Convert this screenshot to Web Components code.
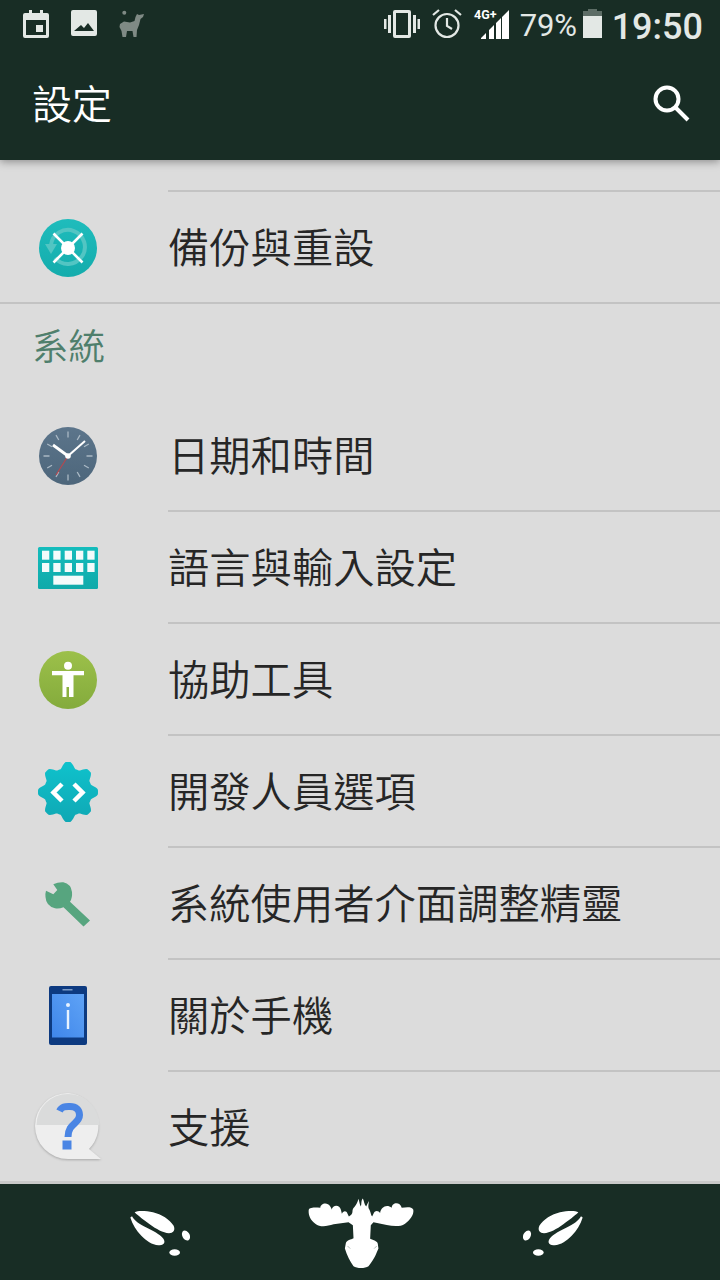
<!DOCTYPE html>
<html lang="zh-Hant">
<head>
<meta charset="utf-8">
<title>設定</title>
<style>
   html, body { margin: 0; padding: 0; }
   body {
      width: 720px;
      height: 1280px;
      overflow: hidden;
      display: flex;
      flex-direction: column;
      background: #dcdcdc;
      font-family: "Noto Sans CJK TC", "Noto Sans", sans-serif;
   }
</style>
</head>
<body>
   <app-header title-text="設定"></app-header>
   <settings-list>
      <list-divider></list-divider>
      <settings-item label="備份與重設" icon="backup" full-divider></settings-item>
      <section-title>系統</section-title>
      <settings-item label="日期和時間" icon="clock"></settings-item>
      <settings-item label="語言與輸入設定" icon="keyboard"></settings-item>
      <settings-item label="協助工具" icon="access"></settings-item>
      <settings-item label="開發人員選項" icon="dev"></settings-item>
      <settings-item label="系統使用者介面調整精靈" icon="tuner"></settings-item>
      <settings-item label="關於手機" icon="phone"></settings-item>
      <settings-item label="支援" icon="help" no-divider></settings-item>
   </settings-list>
   <moose-nav></moose-nav>

<script>
const keys = [4, 15.3, 26.7, 38, 49.3]
   .map(x => `<rect x="${x}" y="12.700" width="7.300" height="9"/><rect x="${x}" y="25" width="7.300" height="9"/>`)
   .join("");

// rounded 8-tooth gear outline, sampled around the centre
let gear = "";
for (let i = 0; i < 160; i++) {
   const a = i / 160 * Math.PI * 2;
   const r = 27 + 3 * Math.max(-1, Math.min(1, 1.3 * Math.cos(8 * a)));
   gear += `${i ? "L" : "M"}${(30 + r * Math.sin(a)).toFixed(2)} ${(30 - r * Math.cos(a)).toFixed(2)}`;
}

// icons are drawn in a 60x60 box, centred in the item's icon column
const ICONS = {
   backup: `
      <defs><linearGradient id="g" x1="0" y1="0" x2="0" y2="1"><stop offset="0" stop-color="#1fbcbc"/><stop offset="1" stop-color="#14acac"/></linearGradient></defs>
      <circle cx="30" cy="30" r="29" fill="url(#g)"/>
      <path d="M13 27a17 17 0 1 1 4 13" fill="none" stroke="#52c5c3" stroke-width="4"/>
      <path d="M7 26h12l-6 10z" fill="#52c5c3"/>
      <path d="M15.500 15.500l29 29M44.500 15.500l-29 29" stroke="#fff" stroke-width="2.600"/>
      <circle cx="30" cy="30" r="7" fill="#fff"/>`,
   clock: `
      <defs><linearGradient id="g" x1="0" y1="0" x2="0" y2="1"><stop offset="0" stop-color="#5c758b"/><stop offset="1" stop-color="#4d667b"/></linearGradient></defs>
      <circle cx="30" cy="30" r="29" fill="url(#g)"/>
      <g stroke="#a9b8c4" stroke-width="1.300">
         <path d="M30 5.500v6M30 48.500v6M5.500 30h6M48.500 30h6M18 9.200l2.800 4.800M42 9.200l-2.800 4.800M18 50.800l2.800-4.800M42 50.800l-2.800-4.800M9.200 18l4.800 2.800M50.800 18l-4.800 2.800M9.200 42l4.800-2.800M50.800 42l-4.800-2.800"/>
      </g>
      <path d="M30 30L18 49" stroke="#b5484f" stroke-width="1.200"/>
      <path d="M30 30L15 19" stroke="#fff" stroke-width="2.800"/>
      <path d="M30 30L47 15" stroke="#fff" stroke-width="2"/>
      <circle cx="30" cy="30" r="2.800" fill="#fff"/>`,
   keyboard: `
      <defs><linearGradient id="g" x1="0" y1="0" x2="0" y2="1"><stop offset="0" stop-color="#14bcbc"/><stop offset="1" stop-color="#10aaaa"/></linearGradient></defs>
      <rect x="0" y="9" width="60" height="42" rx="1.500" fill="url(#g)"/>
      <g fill="#f4fbfb">
         ${keys}
         <rect x="15.300" y="37.700" width="30" height="9"/>
      </g>`,
   access: `
      <defs><linearGradient id="g" x1="0" y1="0" x2="0" y2="1"><stop offset="0" stop-color="#9cc04a"/><stop offset="1" stop-color="#84ab3c"/></linearGradient></defs>
      <circle cx="30" cy="30" r="29" fill="url(#g)"/>
      <circle cx="30" cy="15.700" r="4" fill="#fff"/>
      <path d="M14 21h32v4.300H35.500V47H31V37h-2.500v10H24.500V25.300H14z" fill="#fff"/>`,
   dev: `
      <defs><linearGradient id="g" x1="0" y1="0" x2="0" y2="1"><stop offset="0" stop-color="#0fc2cc"/><stop offset="1" stop-color="#0fa8b4"/></linearGradient></defs>
      <path d="${gear}Z" fill="url(#g)"/>
      <path d="M24 22l-8.500 8.500L24 39M36 22l8.500 8.500L36 39" fill="none" stroke="#fff" stroke-width="4.500"/>`,
   tuner: `
      <path d="M15.300 10.300Q20 8 25.300 8.300Q33 10 34 18Q34.500 24 32 27.700L52 46.500L45.500 52.500L25.500 33.300Q21 35 17 34.300Q8 32 7.500 23Q7 20 8 16.700L15.300 20.300L19.300 16Z" fill="#57a57f"/>`,
   phone: `
      <defs><linearGradient id="g" x1="1" y1="0" x2="0" y2="1"><stop offset="0" stop-color="#5fa3f6"/><stop offset="1" stop-color="#3f86ea"/></linearGradient></defs>
      <rect x="11" y="0" width="38" height="59" rx="2" fill="#0d3a80"/>
      <rect x="24.500" y="3" width="10" height="1.500" fill="#7b9bc8"/>
      <rect x="14" y="8" width="32" height="43.500" fill="url(#g)"/>
      <circle cx="30" cy="19" r="2" fill="#e8f3ff"/>
      <rect x="28.800" y="24" width="2.400" height="19" fill="#e8f3ff"/>`,
   help: `
      <g transform="translate(-3 -5)">
         <path d="M33 0A33 33 0 0 0 33 66L66 66L54 56A33 33 0 0 0 33 0Z" fill="#eeeeee" style="filter:drop-shadow(0 1px 1px #a8a8a8)"/>
         <path d="M1.500 32a31.500 31 0 0 1 63 0z" fill="#dadbdb"/>
         <path d="M24.500 18C27 13 31 13.500 35 13.500C41 13.500 44.500 17 44.500 22C44.500 31 33 30 33 44" fill="none" stroke="#4a85e4" stroke-width="7"/>
         <rect x="27.500" y="47.500" width="9" height="9" fill="#4a85e4"/>
      </g>`
};

class ListDivider extends HTMLElement {
   constructor() {
      super();
      this.attachShadow({ mode: "open" }).innerHTML = `
         <style>
            :host { display: block; height: 2px; margin-left: 168px; background: #c3c3c3; }
         </style>`;
   }
}

class SectionTitle extends HTMLElement {
   constructor() {
      super();
      this.attachShadow({ mode: "open" }).innerHTML = `
         <style>
            :host {
               display: flex;
               align-items: center;
               height: 80px;
               padding: 0 0 16px 32px;
               font-size: 36.500px;
               font-weight: 350;
               color: #4f7f6c;
            }
         </style>
         <slot></slot>`;
   }
}

class SettingsItem extends HTMLElement {
   constructor() {
      super();
      const icon = ICONS[this.getAttribute("icon")] || "";
      this.attachShadow({ mode: "open" }).innerHTML = `
         <style>
            :host { display: block; }
            .row {
               display: flex;
               align-items: center;
               height: 110px;
            }
            .icon { flex: none; width: 168px; padding-left: 38px; box-sizing: border-box; }
            .icon svg { display: block; margin-top: 2px; overflow: visible; }
            .label { font-size: 41.300px; font-weight: 350; color: #262626; white-space: nowrap; line-height: 1; margin-top: -3px; }
            .line { height: 2px; background: #c3c3c3; margin-left: 168px; }
            :host([full-divider]) .line { margin-left: 0; }
            :host([no-divider]) .line { display: none; }
         </style>
         <div class="row">
            <div class="icon"><svg width="60" height="60" viewBox="0 0 60 60">${icon}</svg></div>
            <div class="label">${this.getAttribute("label")}</div>
         </div>
         <div class="line"></div>`;
   }
}

class SettingsList extends HTMLElement {
   constructor() {
      super();
      this.attachShadow({ mode: "open" }).innerHTML = `
         <style>
            :host {
               display: block;
               flex: 1;
               min-height: 0;
               overflow: hidden;
               padding-top: 30px;
               background: #dcdcdc;
            }
         </style>
         <slot></slot>`;
   }
}

class AppHeader extends HTMLElement {
   constructor() {
      super();
      this.attachShadow({ mode: "open" }).innerHTML = `
         <style>
            :host {
               display: block;
               flex: none;
               position: relative;
               z-index: 2;
               background: #182d25;
               box-shadow: 0 2px 8px rgba(0,0,0,.35);
            }
            .status {
               display: flex;
               align-items: center;
               height: 48px;
               padding: 0 17px 0 23px;
               color: #e3e8e5;
            }
            .status svg { display: block; flex: none; overflow: visible; }
            .left { display: flex; gap: 22px; flex: 1; }
            .pct { font: 31px "Roboto", sans-serif; margin: 2px 6px 0 10px; letter-spacing: -.2px; }
            .time { font: 500 36px "Roboto", sans-serif; margin: 5px 0 0 10px; }
            .bar {
               display: flex;
               align-items: center;
               justify-content: space-between;
               height: 112px;
               padding: 0 30px 4px 32px;
               box-sizing: border-box;
               color: #fff;
            }
            .title { font-size: 40px; font-weight: 350; line-height: 1; }
            .bar svg { display: block; margin-top: 1px; }
         </style>
         <div class="status">
            <div class="left">
               <svg width="26" height="28" viewBox="0 0 26 28"><path fill="#e3e8e5" fill-rule="evenodd" d="M6 0h3v3h8V0h3v3h4a2 2 0 0 1 2 2v21a2 2 0 0 1-2 2H2a2 2 0 0 1-2-2V5a2 2 0 0 1 2-2h4zM3 10v15h20V10z"/><rect x="13" y="15" width="7" height="7" fill="#e3e8e5"/></svg>
               <svg width="26" height="26" viewBox="0 0 26 26"><path fill="#e3e8e5" fill-rule="evenodd" d="M2 0h22a2 2 0 0 1 2 2v22a2 2 0 0 1-2 2H2a2 2 0 0 1-2-2V2a2 2 0 0 1 2-2zM3 21l7-6 3 3 4-5 6 8z"/></svg>
               <svg width="26" height="28" viewBox="0 0 26 28"><circle cx="5.300" cy="2.700" r="2" fill="#7f8a85"/><path fill="#7f8a85" d="M25 4L24 7L21.500 9L20 15L18 20L17.500 27L14.500 27L13.500 21L8 21L7 27L3.500 27L2.500 21L.5 17L1 14L5 11.500L11 12.500L15.500 11L16.500 7L18 4L20 5z"/></svg>
            </div>
            <svg width="36" height="28" viewBox="0 0 36 28" fill="#e3e8e5"><path fill-rule="evenodd" d="M11 0h14a2 2 0 0 1 2 2v24a2 2 0 0 1-2 2H11a2 2 0 0 1-2-2V2a2 2 0 0 1 2-2zm1 3v22h12V3z"/><rect x="4" y="5" width="3" height="18"/><rect x="29" y="5" width="3" height="18"/><rect x="0" y="9" width="2.500" height="10"/><rect x="33.500" y="9" width="2.500" height="10"/></svg>
            <svg width="30" height="30" viewBox="0 0 30 30" fill="none" stroke="#e3e8e5" stroke-width="2.200" style="margin-left:12px"><circle cx="15" cy="16.500" r="11.500"/><path d="M15 9v8l5 3"/><path d="M1 6l6-5M29 6l-6-5"/></svg>
            <svg width="36" height="29" viewBox="0 0 36 29" style="margin-left:12px"><path fill="#fff" d="M7 29v-1l5-5v6zM15 29v-9l5-5v14zM22 29V13l5-5v21zM28 29V7l7-7v29z"/><text x="0" y="9" font-family="Roboto, sans-serif" font-size="12.500" font-weight="700" fill="#fff">4G+</text></svg>
            <span class="pct">79%</span>
            <svg width="19" height="30" viewBox="0 0 19 30"><rect x="5" y="0" width="9" height="3" fill="#5d6d66"/><rect x="0" y="2" width="19" height="6" fill="#5d6d66"/><rect x="0" y="7" width="19" height="22" fill="#e3e8e5"/></svg>
            <span class="time">19:50</span>
         </div>
         <div class="bar">
            <span class="title">設定</span>
            <svg width="38" height="38" viewBox="0 0 38 38" fill="none" stroke="#fff" stroke-width="4"><circle cx="15" cy="15" r="11.500"/><path d="M23 23l13 13"/></svg>
         </div>`;
   }
}

class MooseNav extends HTMLElement {
   constructor() {
      super();
      const hoof = `
         <path d="M75 94C85 88 110 90 130 94C155 100 180 115 192 135C198 150 190 157 178 157C160 155 140 145 120 130C105 118 85 105 75 94Z"/>
         <path d="M62 110L67 106C75 120 90 130 110 140C130 150 150 160 160 172C168 182 165 192 150 193C130 195 110 180 95 165C80 150 68 130 62 110Z"/>
         <ellipse cx="229" cy="164" rx="11" ry="16" transform="rotate(-28 229 164)"/>
         <ellipse cx="195" cy="215" rx="16" ry="10"/>`;
      this.attachShadow({ mode: "open" }).innerHTML = `
         <style>
            :host {
               display: flex;
               flex: none;
               justify-content: space-between;
               align-items: center;
               height: 96px;
               padding: 0 135px 0 128px;
               background: #182d25;
               border-top: 3px solid #c9c9c9;
               box-sizing: content-box;
            }
            svg { display: block; fill: #fff; }
         </style>
         <svg width="62" height="47" viewBox="55 85 186 140" style="margin-top:1px">${hoof}</svg>
         <svg width="108" height="72" viewBox="590 50 325 216" style="margin:1px 0 0 8px"><path d="M595 90C596 82 605 80 630 82C630 70 650 62 660 78C665 85 664 88 664 88C668 72 688 72 692 88L695 100C698 92 708 88 712 100L716 108C722 104 727 102 727 90C730 78 738 80 745 55C748 65 748 72 752 78C755 70 752 60 758 54C762 62 762 72 768 78L776 62C776 72 772 80 778 88C782 95 782 105 786 108L790 100C792 90 805 88 810 98C812 80 830 70 845 82C845 65 870 62 875 82C890 80 905 78 910 88C912 105 900 118 885 130C870 140 850 138 830 134L790 126L782 135L780 175C790 180 802 182 803 190L805 205C800 215 795 235 775 258C765 265 740 265 730 258C720 245 710 225 704 205L707 188C710 180 722 178 730 174L728 135L715 126L670 132C650 138 630 142 615 130C600 118 594 105 595 90Z"/><path d="M712 197l8 8M800 197l-8 8" stroke="#8a9a94" stroke-width="2" fill="none"/></svg>
         <svg width="62" height="47" viewBox="55 85 186 140" style="transform:scaleX(-1);margin-top:1px">${hoof}</svg>`;
   }
}

customElements.define("list-divider", ListDivider);
customElements.define("section-title", SectionTitle);
customElements.define("settings-item", SettingsItem);
customElements.define("settings-list", SettingsList);
customElements.define("app-header", AppHeader);
customElements.define("moose-nav", MooseNav);
</script>
</body>
</html>
